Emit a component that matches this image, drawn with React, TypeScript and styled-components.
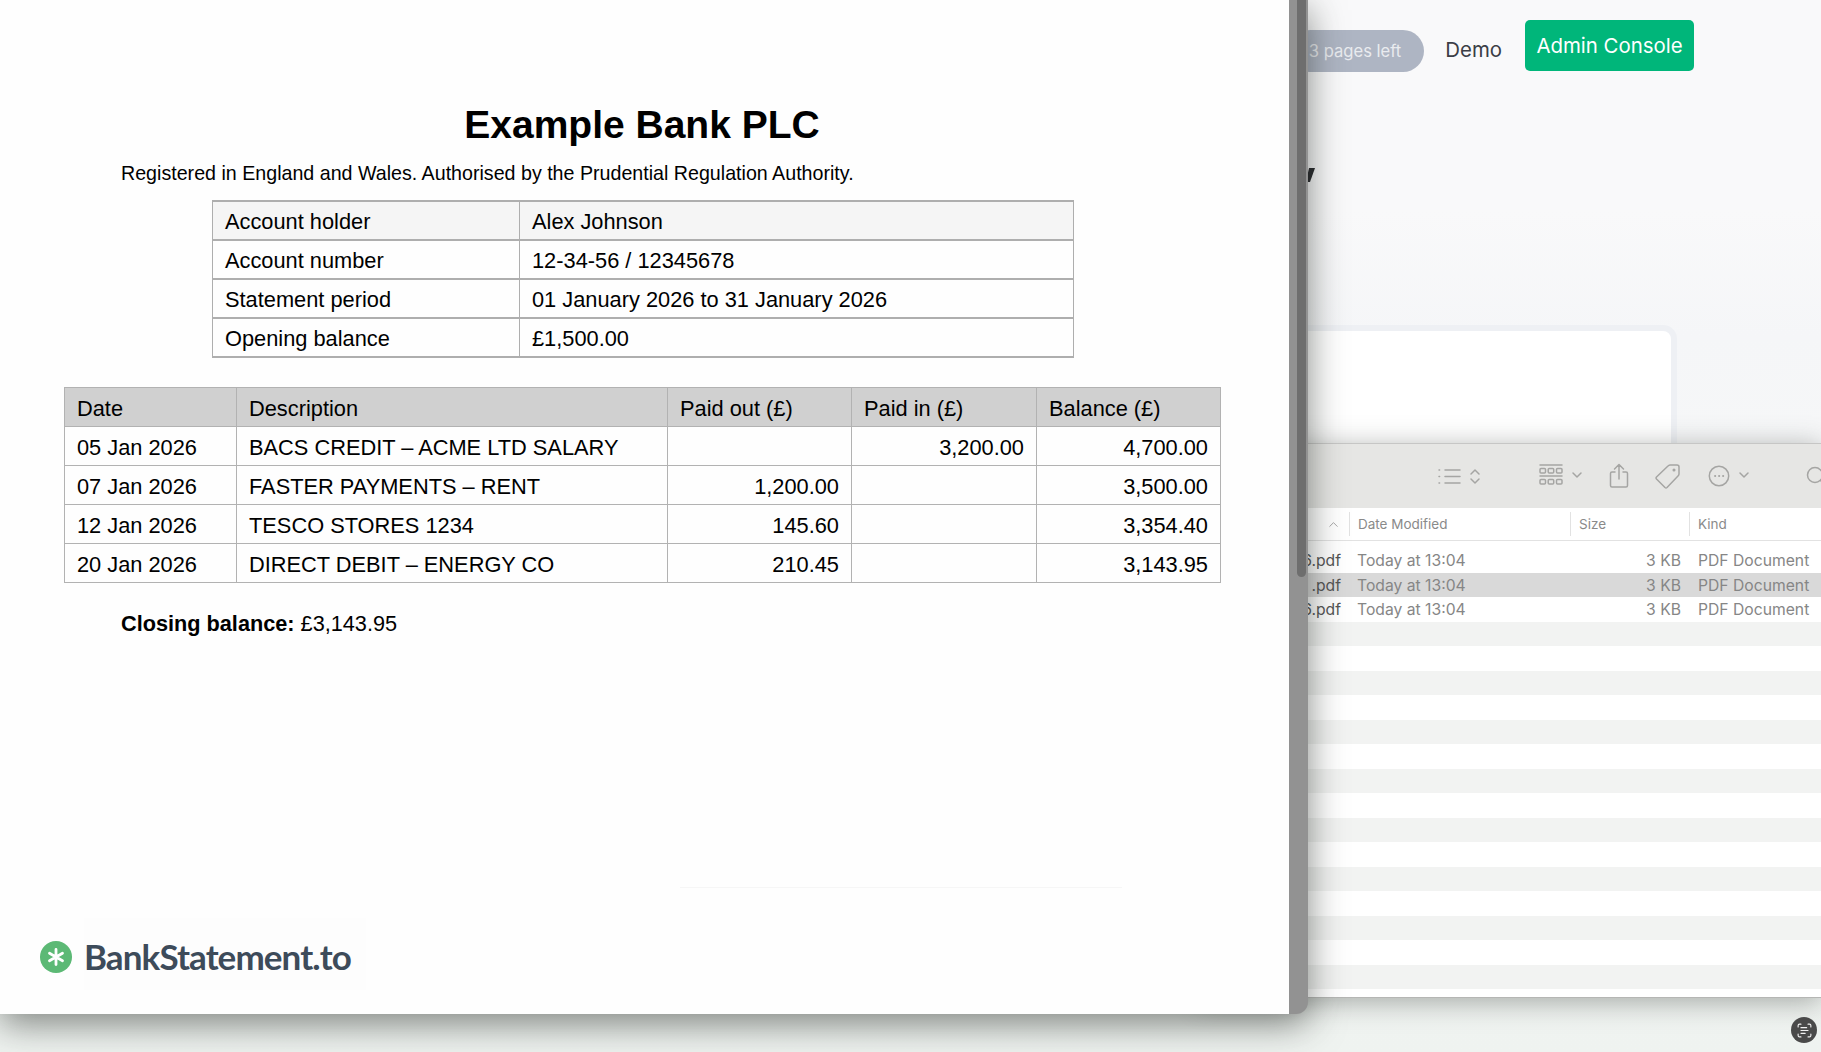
import React from 'react';
import styled, { createGlobalStyle } from 'styled-components';
import { ScanText, ChevronUp } from 'lucide-react';

const Global = createGlobalStyle`
  html, body { margin: 0; padding: 0; width: 100%; height: 100%; overflow: hidden; }
  #root { width: 100%; height: 100%; }
`;

const Desktop = styled.div`
  position: relative;
  width: 1821px;
  height: 1052px;
  overflow: hidden;
  background: linear-gradient(180deg, #f9f9fa 0%, #f9f9fa 20%, #f5f6f8 32%, #f6f7f8 42%, #eff3f0 100%);
  font-family: Inter, "Liberation Sans", sans-serif;
`;

const TopBar = styled.header`
  display: flex;
  justify-content: flex-end;
  align-items: flex-start;
  padding: 20px 127px 0 0;
`;

const Pill = styled.span`
  display: flex;
  align-items: center;
  height: 42px;
  margin-top: 10px;
  padding: 0 23px 0 20px;
  border-radius: 21px;
  background: #aeb5c3;
  color: #e9ebef;
  font-size: 16.6px;
`;

const DemoLink = styled.span`
  margin: 17px 23px 0 21px;
  color: #3b3e46;
  font-size: 20.4px;
  line-height: 25px;
`;

const AdminButton = styled.span`
  display: flex;
  align-items: center;
  justify-content: center;
  box-sizing: border-box;
  width: 169px;
  height: 51px;
  border-radius: 5px;
  background: #00b67a;
  color: #fff;
  font-size: 20.4px;
`;

const HeadingTail = styled.svg`
  position: absolute;
  left: 1306px;
  top: 166px;
`;

const GhostCard = styled.div`
  position: absolute;
  top: 325px;
  left: 1000px;
  box-sizing: border-box;
  width: 677px;
  height: 200px;
  background: #fff;
  border: 6px solid #eef0f4;
  border-radius: 14px;
`;

const Finder = styled.section`
  position: absolute;
  left: 1200px;
  right: 0;
  top: 443px;
  box-sizing: border-box;
  height: 555px;
  display: flex;
  flex-direction: column;
  background: #fff;
  border-top: 1px solid #c6c6c5;
  border-bottom: 1px solid #b5b6b4;
  box-shadow: 0 4px 26px rgba(60, 65, 60, 0.42);
`;

const FinderBar = styled.div`
  position: relative;
  flex: 0 0 64px;
  background: #e6e6e4;
  color: #a5a5a3;
`;

const ToolIcon = styled.svg<{ $x: number; $y: number }>`
  position: absolute;
  left: ${(p) => p.$x}px;
  top: ${(p) => p.$y}px;
  fill: none;
  stroke: currentColor;
  stroke-width: 1.5;
  stroke-linecap: round;
  stroke-linejoin: round;
`;

const ColumnHeader = styled.div`
  flex: 0 0 33px;
  display: grid;
  grid-template-columns: 149px 221px 119px 1fr;
  align-items: center;
  box-sizing: border-box;
  height: 33px;
  border-bottom: 1px solid #e2e2e2;
  color: #8a8a8a;
  font-size: 13.5px;
`;

const HeaderCell = styled.div`
  height: 24px;
  display: flex;
  align-items: center;
  justify-content: flex-end;
  box-sizing: border-box;
  padding-left: 8px;
  border-left: 1px solid #e2e2e2;
  &:first-child {
    border-left: none;
    padding-right: 8px;
    color: #9a9a9a;
  }
  &:not(:first-child) {
    justify-content: flex-start;
  }
`;

const RowList = styled.div`
  padding-top: 7px;
  flex: 1;
  overflow: hidden;
`;

const FileRow = styled.div<{ $tone: 'plain' | 'selected' | 'stripe' }>`
  display: grid;
  grid-template-columns: 149px 221px 111px 1fr;
  align-items: center;
  box-sizing: border-box;
  height: 24.5px;
  padding-top: 1px;
  font-size: 15.7px;
  color: #868686;
  background: ${(p) => (p.$tone === 'selected' ? '#d9d9d9' : p.$tone === 'stripe' ? '#f2f3f2' : '#fff')};
`;

const FileName = styled.span`
  color: #555;
  text-align: right;
  padding-right: 8px;
`;

const FileDate = styled.span`
  padding-left: 8px;
`;

const FileSize = styled.span`
  text-align: right;
`;

const FileKind = styled.span`
  padding-left: 17px;
`;

const ScanBadge = styled.div`
  position: absolute;
  left: 1791px;
  top: 1017px;
  width: 26px;
  height: 26px;
  border-radius: 50%;
  display: flex;
  align-items: center;
  justify-content: center;
  background: #4a4a4a;
  color: #f2f2f2;
`;

const PreviewWindow = styled.section`
  position: absolute;
  left: 0;
  top: 0;
  width: 1308px;
  height: 1014px;
  display: flex;
  background: #929292;
  border-radius: 0 0 12px 0;
  box-shadow: 0 10px 36px rgba(40, 44, 40, 0.56);
`;

const Sheet = styled.main`
  position: relative;
  flex: 0 0 1289px;
  box-sizing: border-box;
  display: flex;
  flex-direction: column;
  align-items: flex-start;
  padding: 103px 0 0 64px;
  background: #fefefe;
  color: #000;
  font-family: "Liberation Sans", Arial, sans-serif;
`;

const ScrollRail = styled.div`
  flex: 1;
  padding-left: 8px;
`;

const ScrollThumb = styled.div`
  width: 8.5px;
  height: 577px;
  background: #6e6e6e;
  border-radius: 0 0 5px 5px;
`;

const Title = styled.h1`
  width: 1156px;
  margin: 0;
  text-align: center;
  font-size: 39px;
  line-height: 44px;
  font-weight: 700;
`;

const Subtitle = styled.p`
  margin: 14px 0 0 57px;
  font-size: 19.65px;
  line-height: 24px;
`;

const Table = styled.table<{ $width: number }>`
  width: ${(p) => p.$width}px;
  border-collapse: collapse;
  table-layout: fixed;
  font-size: 21.8px;
`;

const MetaTable = styled(Table)`
  margin: 15px 0 0 148px;
`;

const LedgerTable = styled(Table)`
  margin-top: 29px;
`;

const Cell = styled.td<{ $right?: boolean; $fill?: string; $heavy?: boolean }>`
  height: 39px;
  box-sizing: border-box;
  padding: 3px 12px 0;
  border: 1px solid ${(p) => (p.$heavy ? '#aeaeae' : '#b2b2b2')};
  border-top-width: ${(p) => (p.$heavy ? 2 : 1)}px;
  border-bottom-width: ${(p) => (p.$heavy ? 2 : 1)}px;
  text-align: ${(p) => (p.$right ? 'right' : 'left')};
  background: ${(p) => p.$fill ?? 'transparent'};
  font-weight: 400;
  line-height: 24px;
  white-space: nowrap;
`;

const Closing = styled.p`
  margin: 29px 0 0 57px;
  font-size: 21.7px;
  line-height: 24px;
`;

const FaintRule = styled.div`
  position: absolute;
  left: 680px;
  top: 887px;
  width: 442px;
  height: 1px;
  background: #f6f6f6;
`;

const LogoPatch = styled.div`
  position: absolute;
  left: 84px;
  top: 918px;
  width: 282px;
  height: 72px;
  background: #fdfdfd;
`;

const LogoRow = styled.div`
  position: absolute;
  left: 40px;
  top: 941px;
  display: flex;
  align-items: center;
  gap: 12px;
`;

const LogoMark = styled.svg`
  display: block;
`;

const LogoText = styled.span`
  margin-top: -2px;
  font-family: Lato, "Open Sans", sans-serif;
  font-size: 35px;
  font-weight: 700;
  letter-spacing: -0.9px;
  color: #3d4b5a;
  line-height: 32px;
`;

const meta = [
  ['Account holder', 'Alex Johnson'],
  ['Account number', '12-34-56 / 12345678'],
  ['Statement period', '01 January 2026 to 31 January 2026'],
  ['Opening balance', '£1,500.00'],
];

const ledgerHead = ['Date', 'Description', 'Paid out (£)', 'Paid in (£)', 'Balance (£)'];

const ledger = [
  ['05 Jan 2026', 'BACS CREDIT – ACME LTD SALARY', '', '3,200.00', '4,700.00'],
  ['07 Jan 2026', 'FASTER PAYMENTS – RENT', '1,200.00', '', '3,500.00'],
  ['12 Jan 2026', 'TESCO STORES 1234', '145.60', '', '3,354.40'],
  ['20 Jan 2026', 'DIRECT DEBIT – ENERGY CO', '210.45', '', '3,143.95'],
];

const files = ['6.pdf', '.pdf', '6.pdf'];

export default function App() {
  return (
    <Desktop>
      <Global />
      <TopBar>
        <Pill>3 pages left</Pill>
        <DemoLink>Demo</DemoLink>
        <AdminButton>Admin Console</AdminButton>
      </TopBar>
      <HeadingTail width="10" height="18" viewBox="0 0 10 18">
        <path d="M3 2 L9 2 L4 16 L0 16 Z" fill="#25262a" />
      </HeadingTail>
      <GhostCard />
      <Finder>
        <FinderBar>
          <ToolIcon $x={238} $y={24} width="23" height="17" viewBox="0 0 23 17">
            <path d="M7 2h15M7 8.500h15M7 15h15M1 2h.6M1 8.500h.6M1 15h.6" />
          </ToolIcon>
          <ToolIcon $x={269} $y={23} width="12" height="19" viewBox="0 0 12 19">
            <path d="M2 7l4-4 4 4M2 12l4 4 4-4" />
          </ToolIcon>
          <ToolIcon $x={339} $y={20} width="24" height="24" viewBox="0 0 24 24" strokeWidth="1">
            <path d="M1 1h22M1 12h22" />
            <rect x="1" y="4.500" width="5.500" height="4.500" rx="1" />
            <rect x="9.200" y="4.500" width="5.500" height="4.500" rx="1" />
            <rect x="17.500" y="4.500" width="5.500" height="4.500" rx="1" />
            <rect x="1" y="15.500" width="5.500" height="4.500" rx="1" />
            <rect x="9.200" y="15.500" width="5.500" height="4.500" rx="1" />
            <rect x="17.500" y="15.500" width="5.500" height="4.500" rx="1" />
          </ToolIcon>
          <ToolIcon $x={371} $y={27} width="12" height="9" viewBox="0 0 12 9">
            <path d="M2 2l4 4 4-4" />
          </ToolIcon>
          <ToolIcon $x={409} $y={19} width="20" height="26" viewBox="0 0 20 26">
            <path d="M6 9H3a1.500 1.500 0 0 0-1.500 1.500v12A1.500 1.500 0 0 0 3 24h14a1.500 1.500 0 0 0 1.500-1.500v-12A1.500 1.500 0 0 0 17 9h-3M10 16V1.500M5.500 6L10 1.500 14.500 6" />
          </ToolIcon>
          <ToolIcon $x={455} $y={19} width="26" height="26" viewBox="0 0 26 26">
            <path d="M15 2h7a2 2 0 0 1 2 2v7a3 3 0 0 1-1 2L12 24.500a1.500 1.500 0 0 1-2 0L1.500 16a1.500 1.500 0 0 1 0-2L13 3a3 3 0 0 1 2-1z" />
            <circle cx="19" cy="7" r="0.800" />
          </ToolIcon>
          <ToolIcon $x={508} $y={21} width="22" height="22" viewBox="0 0 22 22">
            <circle cx="11" cy="11" r="9.700" />
            <path d="M7 11h.3M11 11h.3M15 11h.3" strokeWidth="1.800" />
          </ToolIcon>
          <ToolIcon $x={538} $y={27} width="12" height="9" viewBox="0 0 12 9">
            <path d="M2 2l4 4 4-4" />
          </ToolIcon>
          <ToolIcon $x={606} $y={21} width="20" height="22" viewBox="0 0 20 22">
            <circle cx="9" cy="10" r="7.500" />
            <path d="M14.500 15.500L19 20" />
          </ToolIcon>
        </FinderBar>
        <ColumnHeader>
          <HeaderCell>
            <ChevronUp size={15} strokeWidth={1.4} />
          </HeaderCell>
          <HeaderCell>Date Modified</HeaderCell>
          <HeaderCell>Size</HeaderCell>
          <HeaderCell>Kind</HeaderCell>
        </ColumnHeader>
        <RowList>
          {files.map((f, i) => (
            <FileRow key={i} $tone={i === 1 ? 'selected' : 'plain'}>
              <FileName>{f}</FileName>
              <FileDate>Today at 13:04</FileDate>
              <FileSize>3 KB</FileSize>
              <FileKind>PDF Document</FileKind>
            </FileRow>
          ))}
          {Array.from({ length: 16 }, (_, i) => (
            <FileRow key={i} $tone={i % 2 === 0 ? 'stripe' : 'plain'} />
          ))}
        </RowList>
      </Finder>
      <ScanBadge>
        <ScanText size={17} strokeWidth={1.6} />
      </ScanBadge>
      <PreviewWindow>
        <Sheet>
          <Title>Example Bank PLC</Title>
          <Subtitle>Registered in England and Wales. Authorised by the Prudential Regulation Authority.</Subtitle>
          <MetaTable $width={861}>
            <colgroup>
              <col width="307" />
              <col width="554" />
            </colgroup>
            <tbody>
              {meta.map((row, r) => (
                <tr key={row[0]}>
                  {row.map((c) => (
                    <Cell key={c} $heavy $fill={r === 0 ? '#f5f5f5' : undefined}>
                      {c}
                    </Cell>
                  ))}
                </tr>
              ))}
            </tbody>
          </MetaTable>
          <LedgerTable $width={1156}>
            <colgroup>
              <col width="172" />
              <col width="431" />
              <col width="184" />
              <col width="185" />
              <col width="184" />
            </colgroup>
            <thead>
              <tr>
                {ledgerHead.map((h) => (
                  <Cell as="th" key={h} $fill="#d0d0d0">
                    {h}
                  </Cell>
                ))}
              </tr>
            </thead>
            <tbody>
              {ledger.map((row) => (
                <tr key={row[0]}>
                  {row.map((c, i) => (
                    <Cell key={i} $right={i >= 2}>
                      {c}
                    </Cell>
                  ))}
                </tr>
              ))}
            </tbody>
          </LedgerTable>
          <Closing>
            <b>Closing balance:</b> £3,143.95
          </Closing>
          <FaintRule />
          <LogoPatch />
          <LogoRow>
            <LogoMark width="32" height="32" viewBox="0 0 32 32">
              <circle cx="16" cy="16" r="16" fill="#5cb975" />
              <path d="M16 8.500v15M9.500 12.200l13 7.600M22.500 12.200l-13 7.600" stroke="#fff" strokeWidth="2.800" strokeLinecap="round" />
            </LogoMark>
            <LogoText>BankStatement.to</LogoText>
          </LogoRow>
        </Sheet>
        <ScrollRail>
          <ScrollThumb />
        </ScrollRail>
      </PreviewWindow>
    </Desktop>
  );
}
